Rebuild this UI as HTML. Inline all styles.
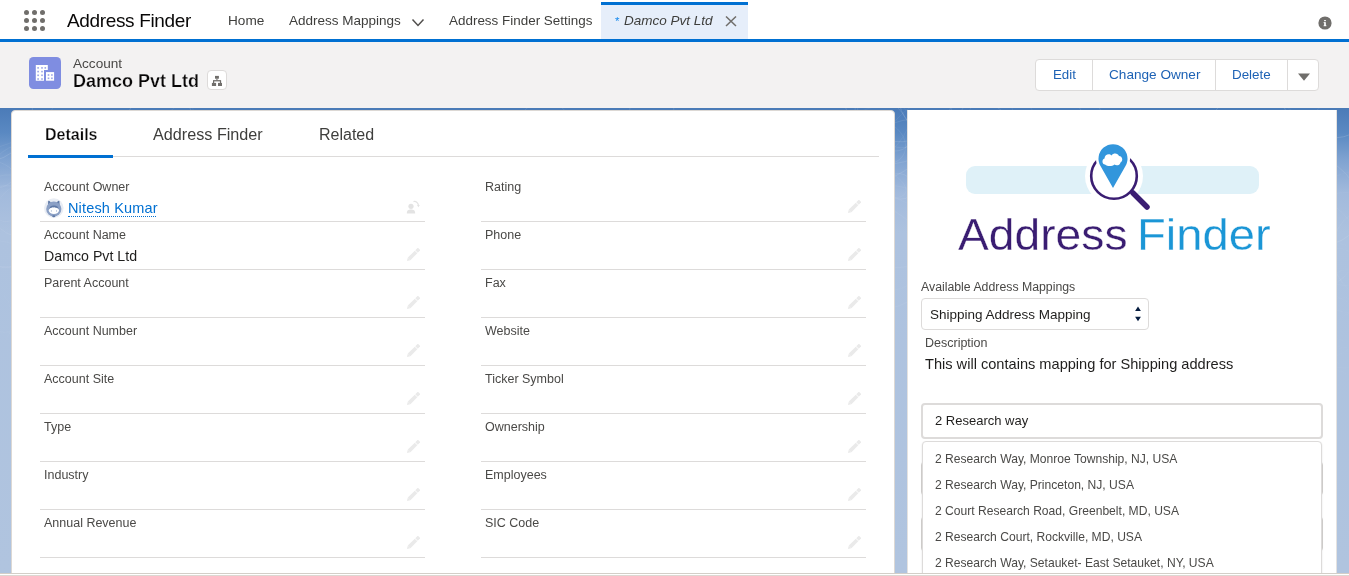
<!DOCTYPE html>
<html><head><meta charset="utf-8">
<style>
*{box-sizing:border-box;margin:0;padding:0}
html,body{width:1349px;height:576px;overflow:hidden;background:#fff;font-family:"Liberation Sans",sans-serif;color:#080707;-webkit-font-smoothing:antialiased}
.a{position:absolute}
.t{position:absolute;white-space:nowrap;line-height:normal;will-change:transform}
.dot{position:absolute;width:5px;height:5px;border-radius:50%;background:#706e6b}
.dv{position:absolute;height:1px;background:#dddbda}
.pen{position:absolute;width:14px;height:14px}
</style></head><body>

<div class="a" style="left:0;top:0;width:1349px;height:39px;background:#fff"></div>
<div class="a" style="left:0;top:39px;width:1349px;height:3px;background:#0070d2"></div>
<div class="a" style="left:0;top:42px;width:1349px;height:66px;background:#f3f2f2"></div>
<div class="a" style="left:0;top:108px;width:1349px;height:465px;background:linear-gradient(#4b7bb8 0px,#5a89c2 25px,#80a3d1 52px,#a2badc 85px,#adc2df 125px,#b0c4df 465px)"></div>
<div class="a" style="left:0;top:108px;width:1349px;height:2px;background:#4a7bb7"></div>
<svg class="a" style="left:0;top:0" width="1349" height="576" viewBox="0 0 1349 576"><defs><clipPath id="bgc"><rect x="0" y="108" width="1349" height="465"/></clipPath></defs><g clip-path="url(#bgc)"><ellipse cx="-14.1" cy="171.4" rx="11.6" ry="9.3" transform="rotate(7 -14.1 171.4)" fill="none" stroke="#fff" stroke-opacity="0.07" stroke-width="0.8"/><ellipse cx="-34.4" cy="316.9" rx="47.1" ry="40.8" transform="rotate(11 -34.4 316.9)" fill="none" stroke="#fff" stroke-opacity="0.02" stroke-width="0.8"/><ellipse cx="179.7" cy="116.1" rx="15.3" ry="9.9" transform="rotate(147 179.7 116.1)" fill="none" stroke="#fff" stroke-opacity="0.07" stroke-width="0.8"/><ellipse cx="6.5" cy="221.1" rx="46.4" ry="37.0" transform="rotate(96 6.5 221.1)" fill="none" stroke="#fff" stroke-opacity="0.07" stroke-width="0.8"/><ellipse cx="933.9" cy="254.7" rx="23.1" ry="19.9" transform="rotate(95 933.9 254.7)" fill="none" stroke="#fff" stroke-opacity="0.06" stroke-width="0.8"/><ellipse cx="159.3" cy="121.2" rx="29.2" ry="33.5" transform="rotate(76 159.3 121.2)" fill="none" stroke="#fff" stroke-opacity="0.14" stroke-width="0.8"/><ellipse cx="1371.0" cy="253.8" rx="44.9" ry="38.7" transform="rotate(82 1371.0 253.8)" fill="none" stroke="#fff" stroke-opacity="0.06" stroke-width="0.8"/><ellipse cx="1359.8" cy="241.8" rx="69.6" ry="73.6" transform="rotate(51 1359.8 241.8)" fill="none" stroke="#fff" stroke-opacity="0.04" stroke-width="0.8"/><ellipse cx="13.5" cy="203.4" rx="21.5" ry="13.6" transform="rotate(133 13.5 203.4)" fill="none" stroke="#fff" stroke-opacity="0.06" stroke-width="0.8"/><ellipse cx="1315.0" cy="300.8" rx="58.8" ry="64.2" transform="rotate(50 1315.0 300.8)" fill="none" stroke="#fff" stroke-opacity="0.02" stroke-width="0.8"/><ellipse cx="930.7" cy="117.8" rx="48.8" ry="20.0" transform="rotate(150 930.7 117.8)" fill="none" stroke="#fff" stroke-opacity="0.07" stroke-width="0.8"/><ellipse cx="1348.1" cy="318.3" rx="50.8" ry="41.3" transform="rotate(111 1348.1 318.3)" fill="none" stroke="#fff" stroke-opacity="0.03" stroke-width="0.8"/><ellipse cx="1179.7" cy="179.5" rx="32.4" ry="25.5" transform="rotate(72 1179.7 179.5)" fill="none" stroke="#fff" stroke-opacity="0.05" stroke-width="0.8"/><ellipse cx="38.8" cy="80.1" rx="17.4" ry="8.4" transform="rotate(65 38.8 80.1)" fill="none" stroke="#fff" stroke-opacity="0.07" stroke-width="0.8"/><ellipse cx="1313.4" cy="230.6" rx="37.4" ry="18.4" transform="rotate(88 1313.4 230.6)" fill="none" stroke="#fff" stroke-opacity="0.08" stroke-width="0.8"/><ellipse cx="1313.0" cy="199.7" rx="50.9" ry="41.4" transform="rotate(37 1313.0 199.7)" fill="none" stroke="#fff" stroke-opacity="0.10" stroke-width="0.8"/><ellipse cx="1382.3" cy="324.6" rx="61.5" ry="58.9" transform="rotate(47 1382.3 324.6)" fill="none" stroke="#fff" stroke-opacity="0.02" stroke-width="0.8"/><ellipse cx="1347.9" cy="239.1" rx="46.0" ry="47.4" transform="rotate(136 1347.9 239.1)" fill="none" stroke="#fff" stroke-opacity="0.04" stroke-width="0.8"/><ellipse cx="269.7" cy="168.9" rx="9.8" ry="4.1" transform="rotate(50 269.7 168.9)" fill="none" stroke="#fff" stroke-opacity="0.06" stroke-width="0.8"/><ellipse cx="1340.3" cy="318.8" rx="30.6" ry="17.6" transform="rotate(41 1340.3 318.8)" fill="none" stroke="#fff" stroke-opacity="0.02" stroke-width="0.8"/><ellipse cx="1133.7" cy="307.3" rx="29.3" ry="26.8" transform="rotate(150 1133.7 307.3)" fill="none" stroke="#fff" stroke-opacity="0.01" stroke-width="0.8"/><ellipse cx="1199.3" cy="277.3" rx="28.6" ry="29.8" transform="rotate(175 1199.3 277.3)" fill="none" stroke="#fff" stroke-opacity="0.03" stroke-width="0.8"/><ellipse cx="935.7" cy="86.9" rx="44.6" ry="34.5" transform="rotate(118 935.7 86.9)" fill="none" stroke="#fff" stroke-opacity="0.13" stroke-width="0.8"/><ellipse cx="897.9" cy="85.3" rx="57.6" ry="56.5" transform="rotate(18 897.9 85.3)" fill="none" stroke="#fff" stroke-opacity="0.14" stroke-width="0.8"/><ellipse cx="-28.9" cy="143.0" rx="26.2" ry="15.5" transform="rotate(106 -28.9 143.0)" fill="none" stroke="#fff" stroke-opacity="0.07" stroke-width="0.8"/><ellipse cx="477.3" cy="245.6" rx="58.5" ry="47.6" transform="rotate(149 477.3 245.6)" fill="none" stroke="#fff" stroke-opacity="0.07" stroke-width="0.8"/><ellipse cx="872.1" cy="232.1" rx="56.1" ry="29.2" transform="rotate(25 872.1 232.1)" fill="none" stroke="#fff" stroke-opacity="0.06" stroke-width="0.8"/><ellipse cx="715.9" cy="276.1" rx="14.6" ry="12.4" transform="rotate(45 715.9 276.1)" fill="none" stroke="#fff" stroke-opacity="0.03" stroke-width="0.8"/><ellipse cx="21.8" cy="190.8" rx="46.0" ry="37.0" transform="rotate(92 21.8 190.8)" fill="none" stroke="#fff" stroke-opacity="0.08" stroke-width="0.8"/><ellipse cx="1343.0" cy="310.7" rx="63.4" ry="35.6" transform="rotate(81 1343.0 310.7)" fill="none" stroke="#fff" stroke-opacity="0.02" stroke-width="0.8"/><ellipse cx="885.3" cy="247.4" rx="56.6" ry="63.3" transform="rotate(28 885.3 247.4)" fill="none" stroke="#fff" stroke-opacity="0.06" stroke-width="0.8"/><ellipse cx="871.4" cy="266.7" rx="13.8" ry="15.3" transform="rotate(29 871.4 266.7)" fill="none" stroke="#fff" stroke-opacity="0.05" stroke-width="0.8"/><ellipse cx="544.7" cy="128.9" rx="27.7" ry="27.1" transform="rotate(4 544.7 128.9)" fill="none" stroke="#fff" stroke-opacity="0.10" stroke-width="0.8"/><ellipse cx="-4.8" cy="108.2" rx="64.9" ry="37.9" transform="rotate(158 -4.8 108.2)" fill="none" stroke="#fff" stroke-opacity="0.07" stroke-width="0.8"/><ellipse cx="1019.5" cy="292.4" rx="49.9" ry="57.7" transform="rotate(73 1019.5 292.4)" fill="none" stroke="#fff" stroke-opacity="0.03" stroke-width="0.8"/><ellipse cx="899.6" cy="186.3" rx="12.5" ry="14.4" transform="rotate(114 899.6 186.3)" fill="none" stroke="#fff" stroke-opacity="0.09" stroke-width="0.8"/><ellipse cx="1163.9" cy="82.9" rx="69.6" ry="51.1" transform="rotate(165 1163.9 82.9)" fill="none" stroke="#fff" stroke-opacity="0.13" stroke-width="0.8"/><ellipse cx="1384.4" cy="92.6" rx="20.5" ry="13.3" transform="rotate(55 1384.4 92.6)" fill="none" stroke="#fff" stroke-opacity="0.14" stroke-width="0.8"/><ellipse cx="-16.8" cy="328.6" rx="10.3" ry="4.3" transform="rotate(91 -16.8 328.6)" fill="none" stroke="#fff" stroke-opacity="0.03" stroke-width="0.8"/><ellipse cx="888.1" cy="244.1" rx="41.8" ry="46.5" transform="rotate(175 888.1 244.1)" fill="none" stroke="#fff" stroke-opacity="0.04" stroke-width="0.8"/><ellipse cx="878.4" cy="181.2" rx="29.5" ry="13.1" transform="rotate(23 878.4 181.2)" fill="none" stroke="#fff" stroke-opacity="0.05" stroke-width="0.8"/><ellipse cx="114.0" cy="297.6" rx="49.6" ry="31.0" transform="rotate(44 114.0 297.6)" fill="none" stroke="#fff" stroke-opacity="0.02" stroke-width="0.8"/><ellipse cx="1340.1" cy="323.2" rx="41.9" ry="25.0" transform="rotate(174 1340.1 323.2)" fill="none" stroke="#fff" stroke-opacity="0.02" stroke-width="0.8"/><ellipse cx="860.1" cy="142.0" rx="56.1" ry="26.5" transform="rotate(147 860.1 142.0)" fill="none" stroke="#fff" stroke-opacity="0.06" stroke-width="0.8"/><ellipse cx="6.9" cy="226.4" rx="40.8" ry="40.8" transform="rotate(118 6.9 226.4)" fill="none" stroke="#fff" stroke-opacity="0.07" stroke-width="0.8"/><ellipse cx="891.2" cy="151.0" rx="46.4" ry="23.9" transform="rotate(148 891.2 151.0)" fill="none" stroke="#fff" stroke-opacity="0.11" stroke-width="0.8"/><ellipse cx="1.0" cy="286.6" rx="44.2" ry="49.3" transform="rotate(123 1.0 286.6)" fill="none" stroke="#fff" stroke-opacity="0.04" stroke-width="0.8"/><ellipse cx="-21.6" cy="174.2" rx="36.0" ry="15.9" transform="rotate(3 -21.6 174.2)" fill="none" stroke="#fff" stroke-opacity="0.08" stroke-width="0.8"/><ellipse cx="-20.4" cy="244.8" rx="12.1" ry="12.0" transform="rotate(45 -20.4 244.8)" fill="none" stroke="#fff" stroke-opacity="0.03" stroke-width="0.8"/><ellipse cx="998.0" cy="203.5" rx="31.7" ry="24.8" transform="rotate(123 998.0 203.5)" fill="none" stroke="#fff" stroke-opacity="0.08" stroke-width="0.8"/><ellipse cx="1307.0" cy="242.9" rx="51.0" ry="45.7" transform="rotate(24 1307.0 242.9)" fill="none" stroke="#fff" stroke-opacity="0.05" stroke-width="0.8"/><ellipse cx="293.7" cy="152.7" rx="40.0" ry="30.9" transform="rotate(84 293.7 152.7)" fill="none" stroke="#fff" stroke-opacity="0.06" stroke-width="0.8"/><ellipse cx="31.5" cy="152.4" rx="12.7" ry="10.3" transform="rotate(179 31.5 152.4)" fill="none" stroke="#fff" stroke-opacity="0.13" stroke-width="0.8"/><ellipse cx="-9.1" cy="115.4" rx="40.5" ry="47.1" transform="rotate(24 -9.1 115.4)" fill="none" stroke="#fff" stroke-opacity="0.13" stroke-width="0.8"/><ellipse cx="312.1" cy="178.5" rx="17.9" ry="20.7" transform="rotate(123 312.1 178.5)" fill="none" stroke="#fff" stroke-opacity="0.07" stroke-width="0.8"/><ellipse cx="1333.8" cy="80.4" rx="54.5" ry="58.4" transform="rotate(22 1333.8 80.4)" fill="none" stroke="#fff" stroke-opacity="0.16" stroke-width="0.8"/><ellipse cx="502.1" cy="177.5" rx="61.9" ry="28.6" transform="rotate(167 502.1 177.5)" fill="none" stroke="#fff" stroke-opacity="0.10" stroke-width="0.8"/><ellipse cx="882.5" cy="142.3" rx="24.5" ry="19.8" transform="rotate(34 882.5 142.3)" fill="none" stroke="#fff" stroke-opacity="0.08" stroke-width="0.8"/><ellipse cx="930.7" cy="259.9" rx="11.1" ry="10.9" transform="rotate(81 930.7 259.9)" fill="none" stroke="#fff" stroke-opacity="0.05" stroke-width="0.8"/><ellipse cx="882.9" cy="122.7" rx="33.7" ry="21.1" transform="rotate(46 882.9 122.7)" fill="none" stroke="#fff" stroke-opacity="0.12" stroke-width="0.8"/><ellipse cx="651.8" cy="109.9" rx="47.9" ry="22.0" transform="rotate(90 651.8 109.9)" fill="none" stroke="#fff" stroke-opacity="0.14" stroke-width="0.8"/><ellipse cx="1024.2" cy="114.9" rx="19.9" ry="9.4" transform="rotate(62 1024.2 114.9)" fill="none" stroke="#fff" stroke-opacity="0.07" stroke-width="0.8"/><ellipse cx="1196.9" cy="175.7" rx="54.2" ry="30.8" transform="rotate(49 1196.9 175.7)" fill="none" stroke="#fff" stroke-opacity="0.10" stroke-width="0.8"/><ellipse cx="905.9" cy="103.1" rx="63.6" ry="45.0" transform="rotate(116 905.9 103.1)" fill="none" stroke="#fff" stroke-opacity="0.10" stroke-width="0.8"/><ellipse cx="171.7" cy="257.4" rx="63.5" ry="49.5" transform="rotate(106 171.7 257.4)" fill="none" stroke="#fff" stroke-opacity="0.02" stroke-width="0.8"/><ellipse cx="1154.0" cy="142.1" rx="14.8" ry="7.7" transform="rotate(94 1154.0 142.1)" fill="none" stroke="#fff" stroke-opacity="0.11" stroke-width="0.8"/><ellipse cx="1031.7" cy="101.3" rx="56.2" ry="22.5" transform="rotate(23 1031.7 101.3)" fill="none" stroke="#fff" stroke-opacity="0.12" stroke-width="0.8"/><ellipse cx="845.1" cy="254.6" rx="15.0" ry="6.8" transform="rotate(94 845.1 254.6)" fill="none" stroke="#fff" stroke-opacity="0.05" stroke-width="0.8"/><ellipse cx="1354.1" cy="329.1" rx="25.3" ry="16.5" transform="rotate(151 1354.1 329.1)" fill="none" stroke="#fff" stroke-opacity="0.02" stroke-width="0.8"/><ellipse cx="1302.6" cy="93.8" rx="20.0" ry="22.2" transform="rotate(116 1302.6 93.8)" fill="none" stroke="#fff" stroke-opacity="0.07" stroke-width="0.8"/></g></svg>
<div class="dot" style="left:24px;top:10px"></div>
<div class="dot" style="left:32px;top:10px"></div>
<div class="dot" style="left:40px;top:10px"></div>
<div class="dot" style="left:24px;top:18px"></div>
<div class="dot" style="left:32px;top:18px"></div>
<div class="dot" style="left:40px;top:18px"></div>
<div class="dot" style="left:24px;top:26px"></div>
<div class="dot" style="left:32px;top:26px"></div>
<div class="dot" style="left:40px;top:26px"></div>
<div class="t" style="left:67px;top:9.8px;font-size:19px;color:#080707;letter-spacing:-0.35px">Address Finder</div>
<div class="t" style="left:227.5px;top:12.69px;font-size:13.6px;color:#3e3e3c;">Home</div>
<div class="t" style="left:288.5px;top:12.78px;font-size:13.5px;color:#3e3e3c;">Address Mappings</div>
<svg class="a" style="left:411px;top:17.5px" width="14" height="10" viewBox="0 0 14 10"><path d="M1.5 1.5 L7 7.5 L12.5 1.5" fill="none" stroke="#514f4d" stroke-width="1.5"/></svg>
<div class="t" style="left:449px;top:12.83px;font-size:13.45px;color:#3e3e3c;">Address Finder Settings</div>
<div class="a" style="left:601px;top:2px;width:147px;height:37px;background:#e6eefa;border-top:3px solid #0070d2"></div>
<div class="t" style="left:614.5px;top:14.5px;font-size:11.5px;color:#1589ee">*</div>
<div class="t" style="left:623.5px;top:12.78px;font-size:13.5px;color:#3e3e3c;font-style:italic">Damco Pvt Ltd</div>
<svg class="a" style="left:725px;top:16px" width="12" height="10.5" viewBox="0 0 12 10.5"><path d="M1 0.5 L11 10 M11 0.5 L1 10" stroke="#706e6b" stroke-width="1.5"/></svg>
<svg class="a" style="left:1318px;top:16px" width="14" height="14" viewBox="0 0 14 14"><circle cx="7" cy="7" r="6.6" fill="#706e6b"/><rect x="6.15" y="6.2" width="1.7" height="3.8" fill="#fff"/><rect x="5.6" y="6.2" width="1.2" height="0.9" fill="#fff"/><rect x="5.6" y="9.3" width="2.8" height="0.9" fill="#fff"/><rect x="6.15" y="4" width="1.7" height="1.2" fill="#fff"/></svg>
<svg class="a" style="left:29px;top:57px" width="32" height="32" viewBox="0 0 32 32"><rect width="32" height="32" rx="4.5" fill="#7f8de1"/><path d="M6.8 8 H18.8 V12.9 H15 V23.7 H6.8 Z" fill="#fff"/><rect x="17" y="15.1" width="8.1" height="8.6" fill="#fff"/><rect x="8.299999999999999" y="10.1" width="1.6" height="1.6" fill="#9aa4e6"/><rect x="8.299999999999999" y="13.799999999999999" width="1.6" height="1.6" fill="#9aa4e6"/><rect x="8.299999999999999" y="17.5" width="1.6" height="1.6" fill="#9aa4e6"/><rect x="8.299999999999999" y="21.2" width="1.6" height="1.6" fill="#9aa4e6"/><rect x="12.2" y="10.1" width="1.6" height="1.6" fill="#9aa4e6"/><rect x="12.2" y="13.799999999999999" width="1.6" height="1.6" fill="#9aa4e6"/><rect x="12.2" y="17.5" width="1.6" height="1.6" fill="#9aa4e6"/><rect x="12.2" y="21.2" width="1.6" height="1.6" fill="#9aa4e6"/><rect x="15.5" y="10.1" width="1.6" height="1.6" fill="#9aa4e6"/><rect x="18.7" y="17.2" width="1.6" height="1.6" fill="#9aa4e6"/><rect x="18.7" y="20.5" width="1.6" height="1.6" fill="#9aa4e6"/><rect x="22.099999999999998" y="17.2" width="1.6" height="1.6" fill="#9aa4e6"/><rect x="22.099999999999998" y="20.5" width="1.6" height="1.6" fill="#9aa4e6"/></svg>
<div class="t" style="left:73px;top:55.89px;font-size:13.6px;color:#4a4947;">Account</div>
<div class="t" style="left:73px;top:70.71px;font-size:18px;color:#080707;font-weight:bold;-webkit-text-stroke:0.25px #f3f2f2">Damco Pvt Ltd</div>
<div class="a" style="left:207px;top:70px;width:20px;height:19.5px;border:1px solid #dddbda;border-radius:4px;background:#fff"></div>
<svg class="a" style="left:211px;top:75px" width="12" height="12" viewBox="0 0 12 12" fill="#706e6b"><rect x="4" y="0.9" width="3.9" height="2.8"/><rect x="5.4" y="3.5" width="1.1" height="1.8"/><rect x="2" y="5.1" width="8.1" height="1.3"/><rect x="2" y="6" width="1.2" height="2"/><rect x="8.9" y="6" width="1.2" height="2"/><rect x="0.9" y="7.9" width="4.2" height="3.1"/><rect x="7" y="7.9" width="4" height="3.1"/></svg>
<div class="a" style="left:1035px;top:59px;width:284px;height:32px;border:1px solid #dddbda;border-radius:4px;background:#fff"></div>
<div class="a" style="left:1092px;top:60px;width:1px;height:30px;background:#dddbda"></div>
<div class="a" style="left:1215px;top:60px;width:1px;height:30px;background:#dddbda"></div>
<div class="a" style="left:1287px;top:60px;width:1px;height:30px;background:#dddbda"></div>
<div class="t" style="left:1052.5px;top:66.96px;font-size:13.3px;color:#1d62b5;">Edit</div>
<div class="t" style="left:1108.5px;top:66.69px;font-size:13.6px;color:#1d62b5;">Change Owner</div>
<div class="t" style="left:1232px;top:66.87px;font-size:13.4px;color:#1d62b5;">Delete</div>
<svg class="a" style="left:1297px;top:73px" width="14" height="9" viewBox="0 0 14 9"><path d="M1 0.5 L13 0.5 L7 7.8 Z" fill="#706e6b"/></svg>
<div class="a" style="left:11px;top:110px;width:884px;height:470px;background:#fff;border-radius:4px;border:1px solid #dcd8d4"></div>
<div class="t" style="left:44.5px;top:125.52px;font-size:16px;color:#080707;font-weight:bold;-webkit-text-stroke:0.25px #fff">Details</div>
<div class="t" style="left:153px;top:125.34px;font-size:16.2px;color:#3e3e3c;">Address Finder</div>
<div class="t" style="left:319px;top:125.52px;font-size:16px;color:#3e3e3c;">Related</div>
<div class="a" style="left:28px;top:156px;width:851px;height:1px;background:#dddbda"></div>
<div class="a" style="left:28px;top:155px;width:85px;height:3px;background:#0070d2"></div>
<div class="t" style="left:44px;top:179.69px;font-size:12.5px;color:#4a4947;">Account Owner</div>
<div class="t" style="left:485px;top:179.69px;font-size:12.5px;color:#4a4947;">Rating</div>
<div class="dv" style="left:40px;top:221px;width:385px"></div>
<div class="dv" style="left:481px;top:221px;width:385px"></div>
<svg class="pen" style="left:847px;top:200px" viewBox="0 0 14 14"><g transform="rotate(-45 7 7)" fill="#eaeaea"><path d="M-1.6 7 L1.5 5.2 L1.5 8.8 Z"/><rect x="1.5" y="5.2" width="9.8" height="3.6"/><rect x="12" y="5.2" width="3.6" height="3.6"/></g></svg>
<div class="t" style="left:44px;top:227.69px;font-size:12.5px;color:#4a4947;">Account Name</div>
<div class="t" style="left:485px;top:227.69px;font-size:12.5px;color:#4a4947;">Phone</div>
<div class="dv" style="left:40px;top:269px;width:385px"></div>
<div class="dv" style="left:481px;top:269px;width:385px"></div>
<svg class="pen" style="left:406px;top:248px" viewBox="0 0 14 14"><g transform="rotate(-45 7 7)" fill="#eaeaea"><path d="M-1.6 7 L1.5 5.2 L1.5 8.8 Z"/><rect x="1.5" y="5.2" width="9.8" height="3.6"/><rect x="12" y="5.2" width="3.6" height="3.6"/></g></svg>
<svg class="pen" style="left:847px;top:248px" viewBox="0 0 14 14"><g transform="rotate(-45 7 7)" fill="#eaeaea"><path d="M-1.6 7 L1.5 5.2 L1.5 8.8 Z"/><rect x="1.5" y="5.2" width="9.8" height="3.6"/><rect x="12" y="5.2" width="3.6" height="3.6"/></g></svg>
<div class="t" style="left:44px;top:275.69px;font-size:12.5px;color:#4a4947;">Parent Account</div>
<div class="t" style="left:485px;top:275.69px;font-size:12.5px;color:#4a4947;">Fax</div>
<div class="dv" style="left:40px;top:317px;width:385px"></div>
<div class="dv" style="left:481px;top:317px;width:385px"></div>
<svg class="pen" style="left:406px;top:296px" viewBox="0 0 14 14"><g transform="rotate(-45 7 7)" fill="#eaeaea"><path d="M-1.6 7 L1.5 5.2 L1.5 8.8 Z"/><rect x="1.5" y="5.2" width="9.8" height="3.6"/><rect x="12" y="5.2" width="3.6" height="3.6"/></g></svg>
<svg class="pen" style="left:847px;top:296px" viewBox="0 0 14 14"><g transform="rotate(-45 7 7)" fill="#eaeaea"><path d="M-1.6 7 L1.5 5.2 L1.5 8.8 Z"/><rect x="1.5" y="5.2" width="9.8" height="3.6"/><rect x="12" y="5.2" width="3.6" height="3.6"/></g></svg>
<div class="t" style="left:44px;top:323.69px;font-size:12.5px;color:#4a4947;">Account Number</div>
<div class="t" style="left:485px;top:323.69px;font-size:12.5px;color:#4a4947;">Website</div>
<div class="dv" style="left:40px;top:365px;width:385px"></div>
<div class="dv" style="left:481px;top:365px;width:385px"></div>
<svg class="pen" style="left:406px;top:344px" viewBox="0 0 14 14"><g transform="rotate(-45 7 7)" fill="#eaeaea"><path d="M-1.6 7 L1.5 5.2 L1.5 8.8 Z"/><rect x="1.5" y="5.2" width="9.8" height="3.6"/><rect x="12" y="5.2" width="3.6" height="3.6"/></g></svg>
<svg class="pen" style="left:847px;top:344px" viewBox="0 0 14 14"><g transform="rotate(-45 7 7)" fill="#eaeaea"><path d="M-1.6 7 L1.5 5.2 L1.5 8.8 Z"/><rect x="1.5" y="5.2" width="9.8" height="3.6"/><rect x="12" y="5.2" width="3.6" height="3.6"/></g></svg>
<div class="t" style="left:44px;top:371.69px;font-size:12.5px;color:#4a4947;">Account Site</div>
<div class="t" style="left:485px;top:371.69px;font-size:12.5px;color:#4a4947;">Ticker Symbol</div>
<div class="dv" style="left:40px;top:413px;width:385px"></div>
<div class="dv" style="left:481px;top:413px;width:385px"></div>
<svg class="pen" style="left:406px;top:392px" viewBox="0 0 14 14"><g transform="rotate(-45 7 7)" fill="#eaeaea"><path d="M-1.6 7 L1.5 5.2 L1.5 8.8 Z"/><rect x="1.5" y="5.2" width="9.8" height="3.6"/><rect x="12" y="5.2" width="3.6" height="3.6"/></g></svg>
<svg class="pen" style="left:847px;top:392px" viewBox="0 0 14 14"><g transform="rotate(-45 7 7)" fill="#eaeaea"><path d="M-1.6 7 L1.5 5.2 L1.5 8.8 Z"/><rect x="1.5" y="5.2" width="9.8" height="3.6"/><rect x="12" y="5.2" width="3.6" height="3.6"/></g></svg>
<div class="t" style="left:44px;top:419.69px;font-size:12.5px;color:#4a4947;">Type</div>
<div class="t" style="left:485px;top:419.69px;font-size:12.5px;color:#4a4947;">Ownership</div>
<div class="dv" style="left:40px;top:461px;width:385px"></div>
<div class="dv" style="left:481px;top:461px;width:385px"></div>
<svg class="pen" style="left:406px;top:440px" viewBox="0 0 14 14"><g transform="rotate(-45 7 7)" fill="#eaeaea"><path d="M-1.6 7 L1.5 5.2 L1.5 8.8 Z"/><rect x="1.5" y="5.2" width="9.8" height="3.6"/><rect x="12" y="5.2" width="3.6" height="3.6"/></g></svg>
<svg class="pen" style="left:847px;top:440px" viewBox="0 0 14 14"><g transform="rotate(-45 7 7)" fill="#eaeaea"><path d="M-1.6 7 L1.5 5.2 L1.5 8.8 Z"/><rect x="1.5" y="5.2" width="9.8" height="3.6"/><rect x="12" y="5.2" width="3.6" height="3.6"/></g></svg>
<div class="t" style="left:44px;top:467.69px;font-size:12.5px;color:#4a4947;">Industry</div>
<div class="t" style="left:485px;top:467.69px;font-size:12.5px;color:#4a4947;">Employees</div>
<div class="dv" style="left:40px;top:509px;width:385px"></div>
<div class="dv" style="left:481px;top:509px;width:385px"></div>
<svg class="pen" style="left:406px;top:488px" viewBox="0 0 14 14"><g transform="rotate(-45 7 7)" fill="#eaeaea"><path d="M-1.6 7 L1.5 5.2 L1.5 8.8 Z"/><rect x="1.5" y="5.2" width="9.8" height="3.6"/><rect x="12" y="5.2" width="3.6" height="3.6"/></g></svg>
<svg class="pen" style="left:847px;top:488px" viewBox="0 0 14 14"><g transform="rotate(-45 7 7)" fill="#eaeaea"><path d="M-1.6 7 L1.5 5.2 L1.5 8.8 Z"/><rect x="1.5" y="5.2" width="9.8" height="3.6"/><rect x="12" y="5.2" width="3.6" height="3.6"/></g></svg>
<div class="t" style="left:44px;top:515.69px;font-size:12.5px;color:#4a4947;">Annual Revenue</div>
<div class="t" style="left:485px;top:515.69px;font-size:12.5px;color:#4a4947;">SIC Code</div>
<div class="dv" style="left:40px;top:557px;width:385px"></div>
<div class="dv" style="left:481px;top:557px;width:385px"></div>
<svg class="pen" style="left:406px;top:536px" viewBox="0 0 14 14"><g transform="rotate(-45 7 7)" fill="#eaeaea"><path d="M-1.6 7 L1.5 5.2 L1.5 8.8 Z"/><rect x="1.5" y="5.2" width="9.8" height="3.6"/><rect x="12" y="5.2" width="3.6" height="3.6"/></g></svg>
<svg class="pen" style="left:847px;top:536px" viewBox="0 0 14 14"><g transform="rotate(-45 7 7)" fill="#eaeaea"><path d="M-1.6 7 L1.5 5.2 L1.5 8.8 Z"/><rect x="1.5" y="5.2" width="9.8" height="3.6"/><rect x="12" y="5.2" width="3.6" height="3.6"/></g></svg>
<svg class="a" style="left:406px;top:200px" width="14" height="14" viewBox="0 0 14 14"><circle cx="5" cy="6.3" r="2.6" fill="#e3e3e3"/><path d="M0.8 13.4 C0.8 10.3 2.5 9.4 5 9.4 C7.5 9.4 9.2 10.3 9.2 13.4 Z" fill="#e3e3e3"/><path d="M7.5 1.6 C10 1 12 2.5 12.4 5.2" fill="none" stroke="#e3e3e3" stroke-width="1.2"/><path d="M11 5 L13.8 5 L12.4 7.2 Z" fill="#e3e3e3"/></svg>
<svg class="a" style="left:44px;top:198px" width="20" height="20" viewBox="0 0 20 20"><circle cx="9.8" cy="10.1" r="9.8" fill="#e9edf4"/><path d="M3.9 8 L4.2 3 Q5.2 2.3 7 4.4 Z M15.7 8 L15.4 3 Q14.4 2.3 12.6 4.4 Z" fill="#5f79a6"/><circle cx="9.8" cy="11" r="7.6" fill="#8ba0c5"/><ellipse cx="9.9" cy="12.2" rx="5.1" ry="3.9" fill="#fff"/><path d="M4.9 11.4 Q5.6 7.4 9.9 7.5 Q14.2 7.4 14.9 11.4 Q13.5 9.4 11.5 9.8 Q10.5 8.6 9.6 9.6 Q8.6 8.9 7.8 9.8 Q6 9.6 4.9 11.4 Z" fill="#5f79a6"/><rect x="6.9" y="12.3" width="0.9" height="1.3" fill="#9fb0cf"/><rect x="12" y="12.3" width="0.9" height="1.3" fill="#9fb0cf"/><ellipse cx="9.8" cy="18.2" rx="1.6" ry="1" fill="#5f79a6"/></svg>
<div class="t" style="left:68px;top:199.68px;font-size:14.5px;color:#0070d2;letter-spacing:0.15px">Nitesh Kumar</div>
<div class="a" style="left:68px;top:216px;width:88px;height:1px;border-top:1px dotted #0070d2"></div>
<div class="t" style="left:44px;top:248.15px;font-size:14.2px;color:#1f1e1d;">Damco Pvt Ltd</div>
<div class="a" style="left:907px;top:110px;width:430px;height:470px;background:#fff;border:1px solid #e4e2e0;border-top:none"></div>
<div class="a" style="left:966px;top:166px;width:293px;height:28px;border-radius:9px;background:#dff1f8"></div>
<svg class="a" style="left:1070px;top:130px" width="100" height="90" viewBox="1070 130 100 90">
  <circle cx="1114" cy="176" r="29" fill="#fff"/>
  <circle cx="1114" cy="176" r="22.8" fill="none" stroke="#3a1d72" stroke-width="2.6"/>
  <line x1="1133" y1="193" x2="1147" y2="207" stroke="#3a1d72" stroke-width="5.5" stroke-linecap="round"/>
  <path d="M1113 188 L1100.5 166 A14.5 14.5 0 1 1 1125.5 166 Z" fill="#3296dc" stroke="#fff" stroke-width="5" stroke-linejoin="round" paint-order="stroke"/>
  <path d="M1105 164.5 C1102 164.5 1101.5 159.5 1104.5 158.5 C1104.5 154.5 1109.5 153 1111.5 155.5 C1113.5 152.5 1118 153 1119 156 C1122.5 156 1123.5 161 1120.5 162.5 C1120 165.5 1116 166 1114.5 164.5 C1112 166.5 1107.5 166.5 1105 164.5 Z" fill="#fff"/>
</svg>
<div class="t" style="left:958px;top:209.88px;font-size:44px;color:#3a1d72;transform:scaleX(1.05);transform-origin:0 0;-webkit-text-stroke:0.3px #fff">Address</div>
<div class="t" style="left:1137.2px;top:209.88px;font-size:44px;color:#1b96d6;transform:scaleX(1.072);transform-origin:0 0;-webkit-text-stroke:0.3px #fff">Finder</div>
<div class="t" style="left:921px;top:280.17px;font-size:12.3px;color:#4a4947;">Available Address Mappings</div>
<div class="a" style="left:921px;top:298px;width:228px;height:32px;border:1px solid #dddbda;border-radius:4px;background:#fff"></div>
<div class="t" style="left:930px;top:307.28px;font-size:13.5px;color:#1f1e1d;">Shipping Address Mapping</div>
<svg class="a" style="left:1132px;top:305px" width="12" height="18" viewBox="0 0 12 18"><path d="M3.1 5.9 L8.9 5.9 L6 1.4 Z M3.1 11.8 L8.9 11.8 L6 16.2 Z" fill="#061c3f"/></svg>
<div class="t" style="left:925px;top:335.79px;font-size:12.5px;color:#4a4947;">Description</div>
<div class="t" style="left:925px;top:356.09px;font-size:14.6px;color:#1f1e1d;">This will contains mapping for Shipping address</div>
<div class="a" style="left:921px;top:403px;width:402px;height:36px;border:2px solid #dddbda;border-radius:4px;background:#fff"></div>
<div class="t" style="left:935px;top:413.44px;font-size:13px;color:#1f1e1d;">2 Research way</div>
<div class="a" style="left:921px;top:461px;width:402px;height:35px;border:1px solid #d4d2d0;border-radius:4px;background:#fff"></div>
<div class="a" style="left:921px;top:516px;width:402px;height:36px;border:1px solid #d4d2d0;border-radius:4px;background:#fff"></div>
<div class="a" style="left:922px;top:441px;width:400px;height:140px;border:1px solid #dddbda;border-radius:4px;background:#fff;box-shadow:0 1px 2px rgba(0,0,0,.12)"></div>
<div class="t" style="left:935px;top:451.85px;font-size:12.1px;color:#4a4947;">2 Research Way, Monroe Township, NJ, USA</div>
<div class="t" style="left:935px;top:477.85px;font-size:12.1px;color:#4a4947;">2 Research Way, Princeton, NJ, USA</div>
<div class="t" style="left:935px;top:503.85px;font-size:12.1px;color:#4a4947;">2 Court Research Road, Greenbelt, MD, USA</div>
<div class="t" style="left:935px;top:529.85px;font-size:12.1px;color:#4a4947;">2 Research Court, Rockville, MD, USA</div>
<div class="t" style="left:935px;top:555.85px;font-size:12.1px;color:#4a4947;">2 Research Way, Setauket- East Setauket, NY, USA</div>
<div class="a" style="left:0;top:573px;width:1349px;height:3px;background:#fff;border-top:1px solid #d3cfc8;border-bottom:1px solid #dcd8d2"></div>
</body></html>
